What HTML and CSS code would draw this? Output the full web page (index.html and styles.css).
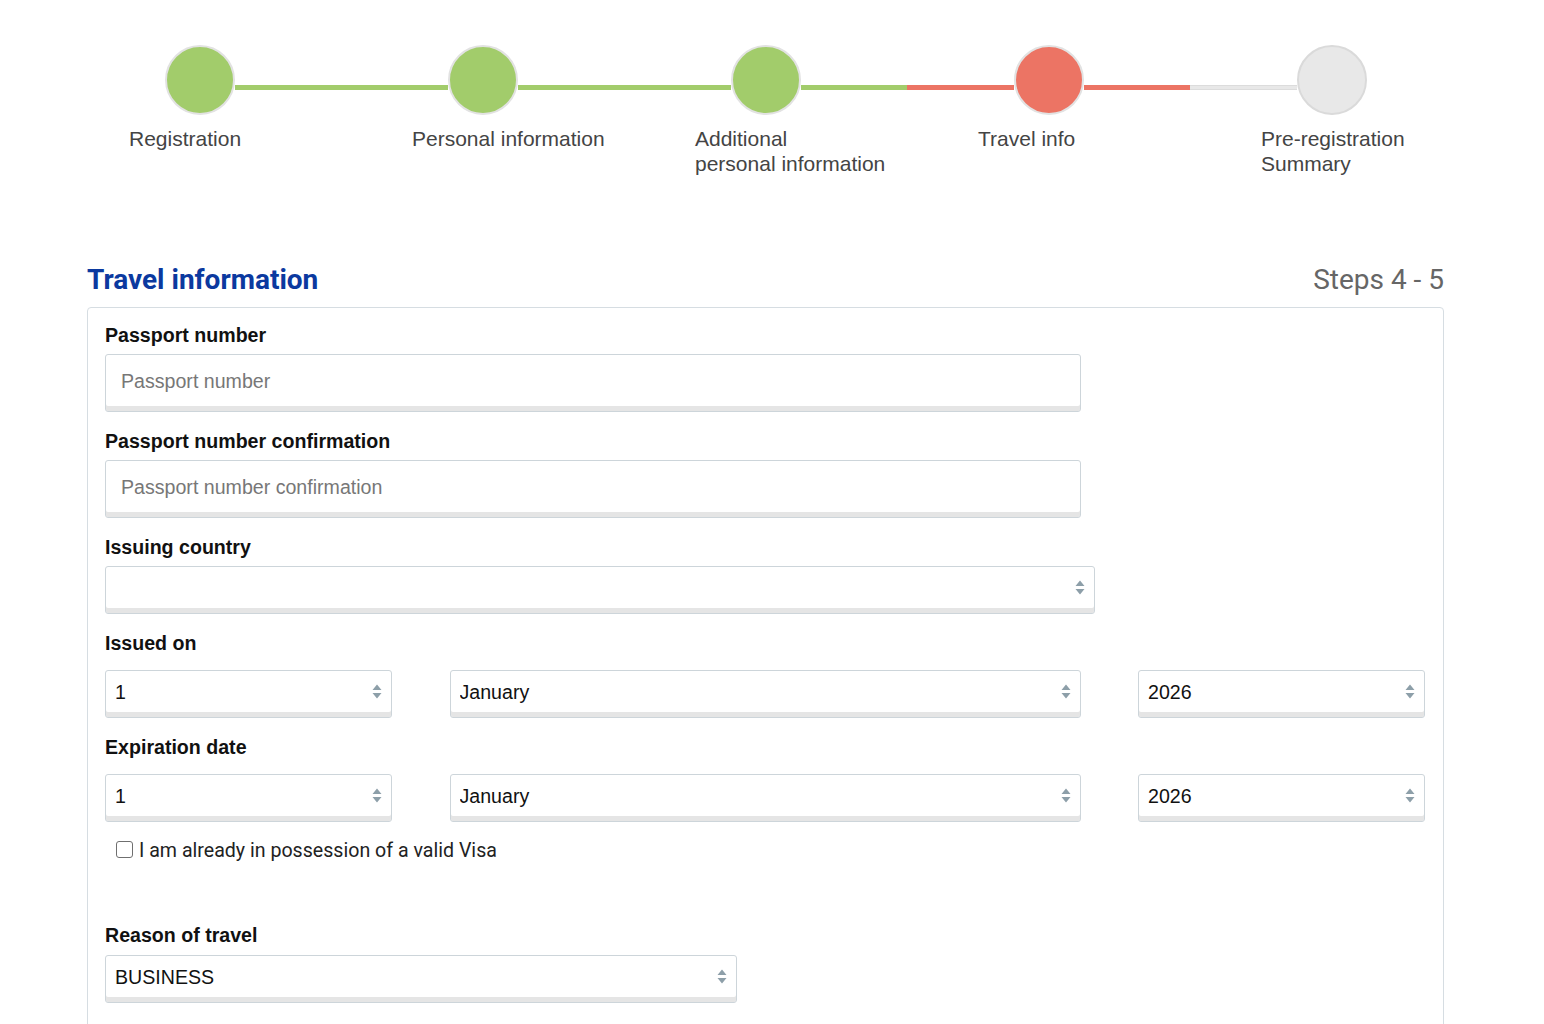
FILE: index.html
```html
<!DOCTYPE html>
<html lang="en">
<head>
  <meta charset="UTF-8">
  <meta name="viewport" content="width=device-width, initial-scale=1.0">
  <title>Travel information</title>
  <link rel="stylesheet" href="styles.css">
</head>
<body>

  <!-- progreso del registro -->
  <div class="stepper">
    <div class="step">
      <div class="track"><span class="line none"></span><span class="dot green"></span><span class="line green"></span></div>
      <div class="step-label">Registration</div>
    </div>
    <div class="step">
      <div class="track"><span class="line green"></span><span class="dot green"></span><span class="line green"></span></div>
      <div class="step-label">Personal information</div>
    </div>
    <div class="step">
      <div class="track"><span class="line green"></span><span class="dot green"></span><span class="line green"></span></div>
      <div class="step-label">Additional<br>personal information</div>
    </div>
    <div class="step">
      <div class="track"><span class="line red"></span><span class="dot red"></span><span class="line red"></span></div>
      <div class="step-label">Travel info</div>
    </div>
    <div class="step">
      <div class="track"><span class="line gray"></span><span class="dot gray"></span><span class="line none"></span></div>
      <div class="step-label">Pre-registration<br>Summary</div>
    </div>
  </div>

  <div class="main">
    <div class="title-row">
      <h2>Travel information</h2>
      <span class="steps">Steps 4 - 5</span>
    </div>

    <form class="card" id="travelForm">
      <div class="field">
        <label for="passport">Passport number</label>
        <input type="text" id="passport" class="txt w-passport" placeholder="Passport number">
      </div>

      <div class="field">
        <label for="passport2">Passport number confirmation</label>
        <input type="text" id="passport2" class="txt w-passport" placeholder="Passport number confirmation">
      </div>

      <div class="field">
        <label for="country">Issuing country</label>
        <div class="select-wrap w-country">
          <select id="country"><option></option></select>
          <svg class="arrows" width="10" height="15" viewBox="0 0 10 15"><path d="M0.5 6 L5 0.5 L9.5 6 Z M0.5 9 L9.5 9 L5 14.5 Z" fill="#8d9fa9"/></svg>
        </div>
      </div>

      <div class="field date">
        <label>Issued on</label>
        <div class="date-row">
          <div class="select-wrap">
            <select><option>1</option></select>
            <svg class="arrows" width="10" height="15" viewBox="0 0 10 15"><path d="M0.5 6 L5 0.5 L9.5 6 Z M0.5 9 L9.5 9 L5 14.5 Z" fill="#8d9fa9"/></svg>
          </div>
          <div class="select-wrap">
            <select><option>January</option></select>
            <svg class="arrows" width="10" height="15" viewBox="0 0 10 15"><path d="M0.5 6 L5 0.5 L9.5 6 Z M0.5 9 L9.5 9 L5 14.5 Z" fill="#8d9fa9"/></svg>
          </div>
          <div class="select-wrap">
            <select><option>2026</option></select>
            <svg class="arrows" width="10" height="15" viewBox="0 0 10 15"><path d="M0.5 6 L5 0.5 L9.5 6 Z M0.5 9 L9.5 9 L5 14.5 Z" fill="#8d9fa9"/></svg>
          </div>
        </div>
      </div>

      <div class="field date">
        <label>Expiration date</label>
        <div class="date-row">
          <div class="select-wrap">
            <select><option>1</option></select>
            <svg class="arrows" width="10" height="15" viewBox="0 0 10 15"><path d="M0.5 6 L5 0.5 L9.5 6 Z M0.5 9 L9.5 9 L5 14.5 Z" fill="#8d9fa9"/></svg>
          </div>
          <div class="select-wrap">
            <select><option>January</option></select>
            <svg class="arrows" width="10" height="15" viewBox="0 0 10 15"><path d="M0.5 6 L5 0.5 L9.5 6 Z M0.5 9 L9.5 9 L5 14.5 Z" fill="#8d9fa9"/></svg>
          </div>
          <div class="select-wrap">
            <select><option>2026</option></select>
            <svg class="arrows" width="10" height="15" viewBox="0 0 10 15"><path d="M0.5 6 L5 0.5 L9.5 6 Z M0.5 9 L9.5 9 L5 14.5 Z" fill="#8d9fa9"/></svg>
          </div>
        </div>
      </div>

      <label class="check">
        <input type="checkbox" id="visa">
        <span>I am already in possession of a valid Visa</span>
      </label>

      <div class="field reason-field">
        <label for="reason">Reason of travel</label>
        <div class="select-wrap w-reason">
          <select id="reason"><option>BUSINESS</option></select>
          <svg class="arrows" width="10" height="15" viewBox="0 0 10 15"><path d="M0.5 6 L5 0.5 L9.5 6 Z M0.5 9 L9.5 9 L5 14.5 Z" fill="#8d9fa9"/></svg>
        </div>
      </div>
    </form>
  </div>

</body>
</html>
```

FILE: styles.css
```css
/* estilos de la pagina de viaje */
body {
  font-family: 'Liberation Sans', Arial, sans-serif;
  background-color: #fff;
  color: #111;
  margin: 0;
  padding: 0;
}

/* pasos */
.stepper {
  display: flex;
  padding: 45px 0 0 58px;
}

.step {
  width: 283px;
}

.track {
  display: flex;
  height: 70px;
}

.line {
  flex: 1;
  height: 5px;
  margin-top: 40px;
  box-sizing: border-box;
}

.line.green { background-color: #a2cc6b; }
.line.red { background-color: #ec7464; }
.line.gray {
  background-color: #e8e8e8;
  border-top: 1px solid #dcdcdc;
  border-bottom: 1px solid #dcdcdc;
}
.line.none { background: none; }

.dot {
  width: 70px;
  height: 70px;
  border-radius: 50%;
  box-sizing: border-box;
  border: 2px solid #e2e2e2;
}

.dot.green { background-color: #a2cc6b; }
.dot.red { background-color: #ec7464; }
.dot.gray { background-color: #e8e8e8; border-color: #dadada; }

.step-label {
  margin: 11px 0 0 71px;
  width: 215px;
  font-size: 21px;
  line-height: 25px;
  color: #444;
}

/* titulo */
.main {
  margin: 0 0 40px 87px;
  width: 1357px;
}

.title-row {
  display: flex;
  justify-content: space-between;
  align-items: baseline;
  margin-top: 87px;
  margin-bottom: 10px;
}

.title-row h2 {
  margin: 0;
  font-family: Roboto, sans-serif;
  font-size: 28px;
  line-height: 34px;
  font-weight: 700;
  color: #0b399f;
}

.steps {
  font-family: Roboto, sans-serif;
  font-size: 28px;
  line-height: 34px;
  color: #666;
}

/* formulario */
.card {
  box-sizing: border-box;
  border: 1px solid #d6dde2;
  border-radius: 4px;
  padding: 15px 18px 40px 17px;
  background-color: #fff;
}

.field {
  margin-bottom: 17px;
}

.field > label {
  display: block;
  font-size: 19.6px;
  line-height: 24px;
  font-weight: 700;
  color: #111;
  margin-bottom: 7px;
}

.field.date > label {
  margin-bottom: 15px;
}

.txt {
  display: block;
  height: 58px;
  box-sizing: border-box;
  border: 1px solid #cdd5da;
  border-radius: 3px;
  box-shadow: inset 0 -5px 0 #e5e5e5;
  padding: 0 15px 4px;
  font-family: 'Liberation Sans', Arial, sans-serif;
  font-size: 19.6px;
  color: #111;
  outline: none;
}

.txt::placeholder {
  color: #777;
}

.w-passport { width: 976px; }
.w-country { width: 990px; }
.w-reason { width: 632px; }

.select-wrap {
  position: relative;
}

.select-wrap select {
  display: block;
  width: 100%;
  height: 48px;
  box-sizing: border-box;
  -webkit-appearance: none;
  appearance: none;
  border: 1px solid #cdd5da;
  border-radius: 3px;
  box-shadow: inset 0 -5px 0 #e5e5e5;
  background-color: #fff;
  padding: 0 30px 4px 9px;
  font-family: 'Liberation Sans', Arial, sans-serif;
  font-size: 19.6px;
  color: #111;
  outline: none;
}

.arrows {
  position: absolute;
  right: 10px;
  top: 14px;
  pointer-events: none;
}

.date-row {
  display: grid;
  grid-template-columns: 287px 631px 287px;
  justify-content: space-between;
}

.check {
  display: flex;
  align-items: center;
  gap: 6px;
  margin: 0 0 60px 11px;
  font-family: Roboto, sans-serif;
  font-size: 19.6px;
  line-height: 24px;
  color: #222;
}

.check input {
  -webkit-appearance: none;
  appearance: none;
  width: 17px;
  height: 17px;
  margin: -3px 0 0;
  border: 1px solid #6f6f6f;
  border-radius: 3px;
  background-color: #fff;
}

.field.reason-field > label {
  margin-bottom: 8px;
}
```
